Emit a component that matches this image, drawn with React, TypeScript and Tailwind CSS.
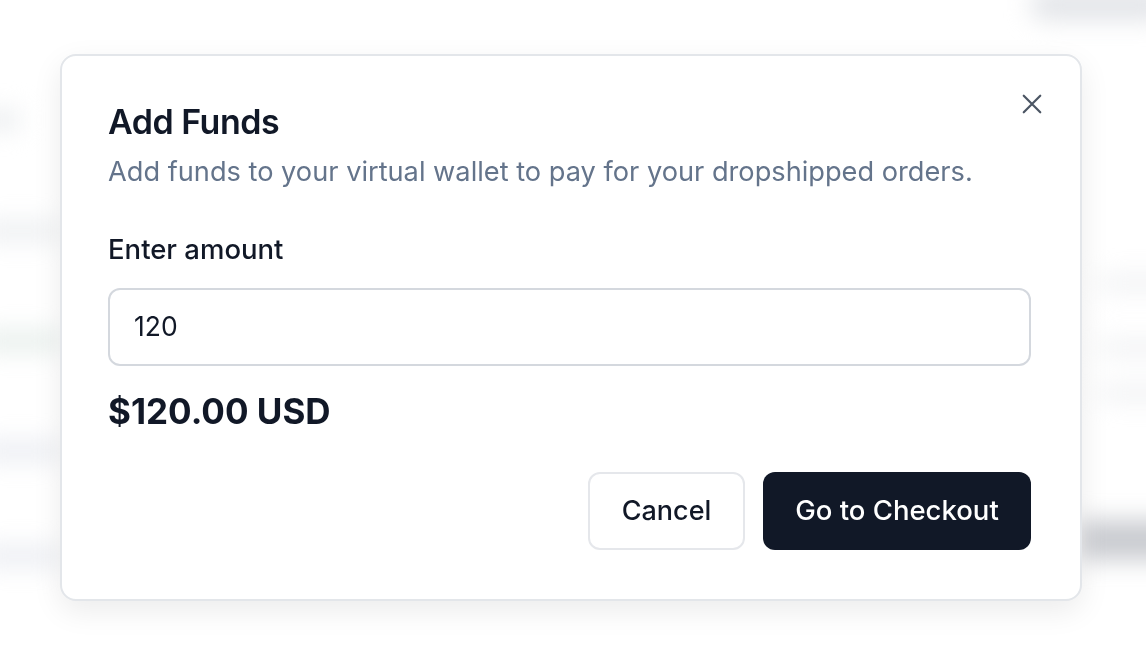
import React from "react";

export default function App() {
  return (
    <div className="relative w-[1146px] h-[654px] overflow-hidden bg-white" style={{ fontFamily: "Inter, 'Noto Sans', sans-serif" }}>
      {/* blurred page behind the dialog */}
      <div className="absolute inset-0 blur-[12px] pointer-events-none">
        <div className="absolute left-[1030px] top-[-10px] w-[140px] h-[30px] bg-[#e2e4e8] rounded-full" />
        <div className="absolute left-[-20px] top-[110px] w-[40px] h-[20px] bg-[#eceef0]" />
        <div className="absolute left-[-20px] top-[220px] w-[80px] h-[22px] bg-[#eef0f2]" />
        <div className="absolute left-[-20px] top-[330px] w-[80px] h-[22px] bg-[#e8efec]" />
        <div className="absolute left-[-20px] top-[440px] w-[80px] h-[22px] bg-[#eceef3]" />
        <div className="absolute left-[-20px] top-[545px] w-[80px] h-[22px] bg-[#eceef3]" />
        <div className="absolute left-[1100px] top-[275px] w-[80px] h-[16px] bg-[#f0f1f3]" />
        <div className="absolute left-[1100px] top-[340px] w-[80px] h-[16px] bg-[#f0f1f3]" />
        <div className="absolute left-[1100px] top-[385px] w-[80px] h-[16px] bg-[#f0f1f3]" />
        <div className="absolute left-[1080px] top-[520px] w-[100px] h-[40px] bg-[#c9cbd0]" />
      </div>

      <div className="relative pl-[60px] pt-[54px]">
        <div className="relative w-[1022px] h-[547px] rounded-[16px] border-2 border-[#e3e6ea] bg-white shadow-[0_10px_30px_rgba(0,0,0,0.08)] px-[46px] pt-[44px] flex flex-col">
          <button className="absolute right-[34px] top-[34px] w-[28px] h-[28px] flex items-center justify-center text-[#4b5563]">
            <svg width="22" height="22" viewBox="0 0 24 24" fill="none" stroke="currentColor" strokeWidth="2.4" strokeLinecap="round">
              <path d="M3 3 L21 21 M21 3 L3 21" />
            </svg>
          </button>
          <h2 className="text-[34px] leading-[44px] font-semibold tracking-[-0.5px] text-[#111827]">Add Funds</h2>
          <p className="mt-[8px] text-[27.2px] leading-[40px] text-[#64748b]">Add funds to your virtual wallet to pay for your dropshipped orders.</p>
          <label className="mt-[39px] text-[27.5px] leading-[36px] font-medium text-[#111827]">Enter amount</label>
          <div className="mt-[21px] h-[78px] w-[923px] rounded-[12px] border-2 border-[#d4d8de] flex items-center px-[24px] text-[26.5px] text-[#111827]">120</div>
          <div className="mt-[23px] text-[35px] leading-[44px] font-bold text-[#111827]">$120.00 USD</div>
          <div className="mt-[39px] w-[923px] flex justify-end gap-[18px]">
            <button className="w-[157px] h-[78px] rounded-[12px] border-2 border-[#e5e7eb] bg-white text-[27px] font-medium text-[#111827]">Cancel</button>
            <button className="w-[268px] h-[78px] rounded-[12px] bg-[#111827] text-[27.5px] font-medium text-white">Go to Checkout</button>
          </div>
        </div>
      </div>
    </div>
  );
}
